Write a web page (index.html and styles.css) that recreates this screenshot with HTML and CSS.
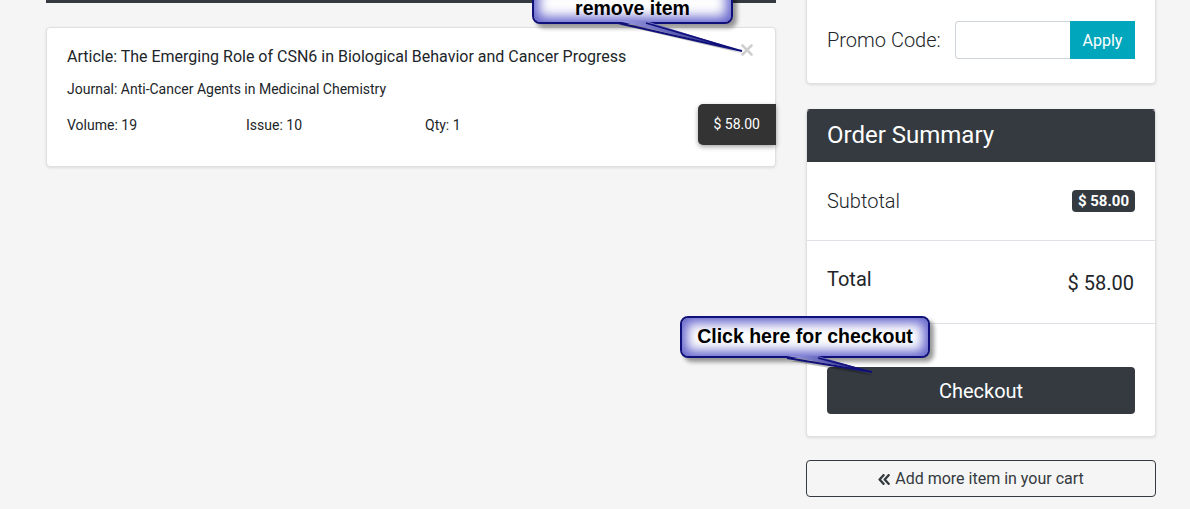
FILE: index.html
```html
<!DOCTYPE html>
<html lang="en">
<head>
<meta charset="utf-8">
<title>Cart</title>
<link rel="stylesheet" href="styles.css">
</head>
<body>
<div class="page">
  <main class="main">
    <div class="topbar"></div>
    <div class="item-card">
      <h3 class="item-title">Article: The Emerging Role of CSN6 in Biological Behavior and Cancer Progress</h3>
      <span class="remove" aria-label="remove">
        <svg width="12" height="12" viewBox="0 0 12 12"><path d="M1.5 1.5 L10.5 10.5 M10.5 1.5 L1.5 10.5" stroke="#cfcfcf" stroke-width="2.6" stroke-linecap="round"/></svg>
      </span>
      <p class="journal">Journal: Anti-Cancer Agents in Medicinal Chemistry</p>
      <div class="item-meta">
        <span class="meta">Volume: 19</span>
        <span class="meta">Issue: 10</span>
        <span class="meta">Qty: 1</span>
        <span class="price">$ 58.00</span>
      </div>
    </div>
  </main>
  <aside class="side">
    <div class="card promo">
      <label class="promo-label">Promo Code:</label>
      <div class="input-group">
        <input class="promo-input" type="text">
        <button class="apply">Apply</button>
      </div>
    </div>
    <div class="card summary">
      <div class="summary-head">Order Summary</div>
      <div class="row subtotal">
        <span class="row-label">Subtotal</span>
        <span class="badge">$ 58.00</span>
      </div>
      <div class="row total">
        <span class="total-label">Total</span>
        <span class="total-value">$ 58.00</span>
      </div>
      <div class="row checkout-row">
        <button class="checkout">Checkout</button>
      </div>
    </div>
    <a class="add-more" href="#">
      <svg class="dbl" width="12" height="11" viewBox="0 0 12 11"><path d="M5.5 1.2 L1.6 5.5 L5.5 9.8 M10.6 1.2 L6.7 5.5 L10.6 9.8" fill="none" stroke="#343a40" stroke-width="2.4" stroke-linejoin="round" stroke-linecap="round"/></svg>
      Add more item in your cart
    </a>
  </aside>
</div>

<div class="callout c1">remove item</div>
<div class="callout c2">Click here for checkout</div>
<svg class="tails" width="1190" height="509" viewBox="0 0 1190 509">
  <defs>
    <linearGradient id="tg1" x1="0" y1="0" x2="1" y2="0">
      <stop offset="0" stop-color="#9a9ae0"/>
      <stop offset="1" stop-color="#1a1a86"/>
    </linearGradient>
  </defs>
  <polygon points="621,25 649,25 745,54" fill="rgba(0,0,0,0.25)"/>
  <polygon points="618,21 646,21 742,51" fill="url(#tg1)"/>
  <path d="M618 23 L742 51 L646 23" fill="none" stroke="#10107a" stroke-width="1.8"/>
  <polygon points="790,361 821,361 875,376" fill="rgba(0,0,0,0.25)"/>
  <polygon points="787,356 818,356 872,372" fill="url(#tg1)"/>
  <path d="M787 358 L872 372 L818 358" fill="none" stroke="#10107a" stroke-width="1.8"/>
</svg>
</body>
</html>
```
FILE: styles.css
```css
* { box-sizing: border-box; }
html, body { margin: 0; padding: 0; }
body {
  position: relative;
  width: 1190px;
  height: 509px;
  overflow: hidden;
  background: #f5f5f5;
  font-family: Roboto, "Liberation Sans", sans-serif;
  color: #212529;
}
.page {
  display: flex;
  align-items: flex-start;
  gap: 30px;
  padding-left: 46px;
}
.main { width: 730px; }
.topbar { height: 3px; background: #343a40; }
.item-card {
  position: relative;
  margin-top: 24px;
  background: #fff;
  border: 1px solid #e0e0e0;
  border-radius: 4px;
  box-shadow: 0 1px 3px rgba(0,0,0,0.1);
  padding: 19px 20px 21px;
}
.item-title {
  margin: 0;
  font-size: 16px;
  line-height: 20px;
  font-weight: 400;
}
.remove {
  position: absolute;
  top: 16px;
  right: 22px;
  width: 12px;
  height: 12px;
  display: block;
}
.remove svg { display: block; }
.journal {
  margin: 13px 0 0;
  font-size: 14px;
  line-height: 18px;
}
.item-meta {
  display: flex;
  align-items: center;
  margin-top: 6px;
  font-size: 14px;
}
.meta { width: 179px; padding-top: 1px; }
.price {
  margin-left: auto;
  margin-right: -21px;
  background: #333;
  color: #fff;
  font-size: 14px;
  line-height: 17px;
  padding: 12px 16px 12px 15px;
  border-radius: 5px 0 0 5px;
  box-shadow: 0 2px 5px rgba(0,0,0,0.35);
}
.side { width: 350px; }
.card {
  background: #fff;
  border: 1px solid #e0e0e0;
  border-radius: 4px;
  box-shadow: 0 1px 3px rgba(0,0,0,0.1);
}
.promo {
  margin-top: -20px;
  padding: 40px 20px 24px;
  display: flex;
  align-items: center;
  justify-content: space-between;
}
.promo-label {
  font-size: 20px;
  font-weight: 300;
  color: #212529;
  white-space: nowrap;
}
.input-group { display: flex; flex-shrink: 0; }
.promo-input {
  width: 115px;
  height: 38px;
  border: 1px solid #ced4da;
  border-right: none;
  border-radius: 4px 0 0 4px;
  margin: 0;
  padding: 0 10px;
  font-family: inherit;
}
.apply {
  width: 65px;
  height: 38px;
  border: none;
  margin: 0;
  background: #00a6bc;
  color: #fff;
  font-family: inherit;
  font-size: 16px;
  border-radius: 0;
}
.summary {
  margin-top: 25px;
  overflow: hidden;
  border-top-color: #343a40;
}
.summary-head {
  background: #343a40;
  color: #fff;
  font-size: 24px;
  line-height: 29px;
  padding: 11px 20px 12px;
}
.row {
  display: flex;
  justify-content: space-between;
  padding: 0 20px;
  border-bottom: 1px solid #dee2e6;
}
.subtotal {
  align-items: center;
  padding-top: 27px;
  padding-bottom: 27px;
}
.row-label {
  font-size: 20px;
  font-weight: 300;
  line-height: 24px;
}
.badge {
  background: #343a40;
  color: #fff;
  font-weight: 700;
  font-size: 15px;
  line-height: 16px;
  padding: 3px 6px;
  border-radius: 4px;
}
.total {
  align-items: flex-start;
  padding-top: 26px;
  padding-bottom: 28px;
}
.total-label {
  font-size: 20px;
  line-height: 24px;
}
.total-value {
  font-size: 20px;
  line-height: 24px;
  padding-top: 4px;
  margin-right: 1px;
}
.checkout-row {
  border-bottom: none;
  padding-top: 43px;
  padding-bottom: 22px;
}
.checkout {
  width: 100%;
  height: 47px;
  border: none;
  border-radius: 4px;
  background: #343a40;
  color: #fff;
  font-family: inherit;
  font-size: 20px;
}
.add-more {
  margin-top: 23px;
  display: flex;
  align-items: center;
  justify-content: center;
  gap: 5px;
  height: 37px;
  border: 1px solid #343a40;
  border-radius: 4px;
  color: #343a40;
  text-decoration: none;
  font-size: 16px;
}
.dbl { display: block; margin-top: 1px; }
.callout {
  position: absolute;
  border: 2px solid #10107a;
  border-radius: 8px;
  background: #fff;
  box-shadow: inset 0 0 12px 5px rgba(70,70,195,0.85), 4px 4px 4px rgba(0,0,0,0.4);
  font-family: "Liberation Sans", Arial, sans-serif;
  font-weight: 700;
  font-size: 19.5px;
  line-height: 22px;
  color: #000;
  text-align: center;
  white-space: nowrap;
}
.c1 {
  left: 532px;
  top: -18px;
  width: 201px;
  height: 42px;
  padding-top: 13px;
}
.c2 {
  left: 680px;
  top: 316px;
  width: 250px;
  height: 42px;
  padding-top: 7px;
}
.tails {
  position: absolute;
  left: 0;
  top: 0;
  pointer-events: none;
}
```
